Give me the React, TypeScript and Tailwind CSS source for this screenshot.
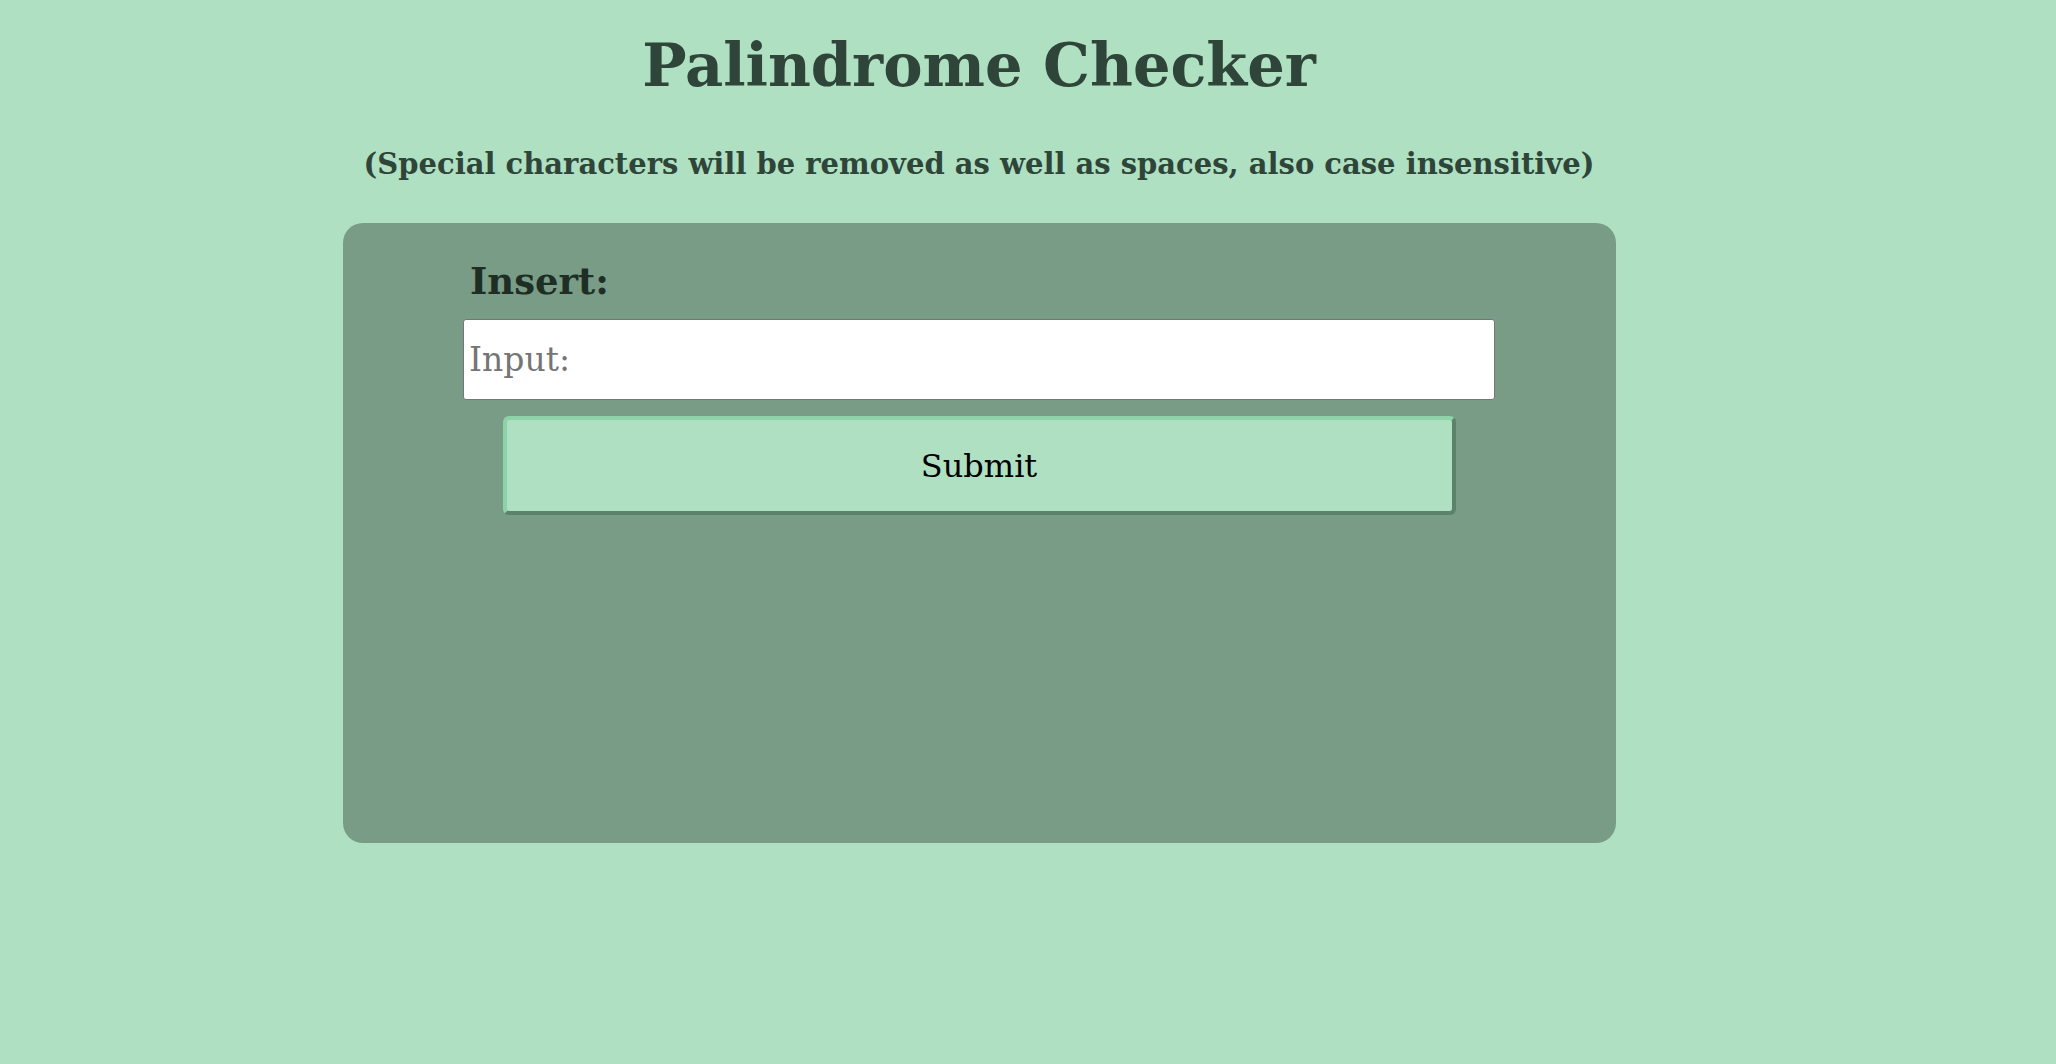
const App = () => {
	return (
		<div className="min-h-screen w-full bg-[#aee0c1]" style={{ fontFamily: '"DejaVu Serif", serif' }}>
			<div className="w-[1958px] flex flex-col items-center">
				<h1 className="mt-[26px] text-[59px] leading-[80px] font-bold text-[#2f4539]">Palindrome Checker</h1>
				<h3 className="mt-[40px] text-[29px] leading-[36px] font-bold text-[#2f4539]">
					(Special characters will be removed as well as spaces, also case insensitive)
				</h3>

				<div className="mt-[41px] w-[1273px] h-[620px] rounded-[20px] bg-[#799c87] flex flex-col items-center">
					<div className="w-[1032px] mt-[36px] flex flex-col">
						<label className="ml-[7px] text-[37px] leading-[44px] font-bold text-[#1f2e25]">Insert:</label>
						<input
							className="mt-[16px] h-[81px] w-full rounded-[3px] border border-[#767676] bg-white px-[5px] text-[33px] text-black placeholder:text-[#757575] outline-none"
							placeholder="Input:"
						/>
					</div>
					<button className="mt-[16px] w-[953px] h-[99px] rounded-[6px] border-4 border-t-[#8ed2a8] border-l-[#8ed2a8] border-b-[#5b826b] border-r-[#5b826b] bg-[#aee0c1] text-[32px] text-black">
						Submit
					</button>
				</div>
			</div>
		</div>
	)
}

export default App
